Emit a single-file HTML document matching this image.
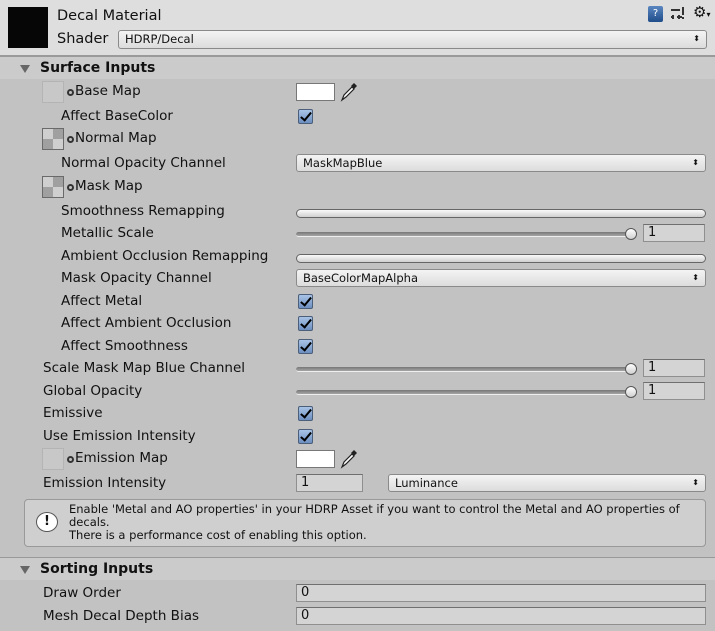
<!DOCTYPE html>
<html><head><meta charset="utf-8"><style>
*{margin:0;padding:0;box-sizing:border-box}
body{width:715px;height:631px;background:#c2c2c2;font-family:"DejaVu Sans","Liberation Sans",sans-serif;font-size:13.5px;color:#111;position:relative;overflow:hidden}
.a{position:absolute}
.lbl{position:absolute;white-space:nowrap;line-height:16px}
.dd{position:absolute;height:18px;border:1px solid #8a8a8a;border-radius:3px;background:linear-gradient(#f4f4f4,#dcdcdc);font-size:11.5px;line-height:16px;padding-left:6px}
.dd:after{content:"⬍";position:absolute;right:6px;top:0;font-size:8px}
.cb{position:absolute;left:298px;width:15px;height:15px;border:1px solid #4b5f7a;border-radius:2px;background:linear-gradient(#a9c3e6,#6d8fc0)}
.cb:after{content:"";position:absolute;left:4px;top:0px;width:4px;height:9px;border:solid #000;border-width:0 2.5px 2.5px 0;transform:rotate(40deg)}
.sl{position:absolute;left:296px;width:336px;height:5px;border-radius:3px;background:linear-gradient(#777,#a5a5a5);border-bottom:1px solid #eee}
.knob{position:absolute;left:625px;width:12px;height:12px;border-radius:50%;border:1px solid #555;background:linear-gradient(#fff,#d0d0d0)}
.num{position:absolute;height:18px;border:1px solid #8f8f8f;border-top-color:#6f6f6f;background:#d4d4d4;font-size:13px;line-height:16px;padding-left:4px}
.mm{position:absolute;left:296px;width:410px;height:9px;border-radius:5px;border:1px solid #666;background:linear-gradient(#fafafa,#d0d0d0)}
.tex{position:absolute;left:42px;width:22px;height:22px;border:1px solid #6a6a6a;background:conic-gradient(#a0a0a0 0 25%,#cfcfcf 0 50%,#a0a0a0 0 75%,#cfcfcf 0)}
.texe{position:absolute;left:42px;width:22px;height:22px;border:1px solid #b4b4b4;background:#c8c8c8}
.dot{display:inline-block;width:7px;height:7px;border:2px solid #333;border-radius:50%;margin-right:1px;vertical-align:-1px}
.col{position:absolute;left:296px;width:39px;height:18px;border:1px solid #777;background:#fff}
.pip{position:absolute;left:340px;width:18px;height:20px}
.hdr{position:absolute;left:0;width:715px;height:22px;background:#cbcbcb;font-weight:bold;font-size:14px;line-height:22px}
.tri{position:absolute;left:20px;top:8px;width:0;height:0;border-left:5px solid transparent;border-right:5px solid transparent;border-top:8px solid #666}
</style></head><body>
<div class="a" style="left:0;top:0;width:715px;height:57px;background:#dedede;border-bottom:2px solid #9a9a9a"></div>
<div class="a" style="left:8px;top:7px;width:40px;height:41px;background:#060606"></div>
<div class="lbl" style="left:57px;top:8px;font-size:14.5px">Decal Material</div>
<div class="lbl" style="left:57px;top:31px;font-size:14.5px">Shader</div>
<div class="dd" style="left:118px;top:30px;width:589px;height:19px;font-size:11.5px">HDRP/Decal</div>
<div class="a" style="left:648px;top:6px;width:15px;height:16px;border-radius:2px;background:linear-gradient(#5a86c0,#1f4d8a);color:#fff;font-size:10px;text-align:center;line-height:16px">?</div>
<svg class="a" style="left:670px;top:6px" width="16" height="16"><path d="M1 4h9M1 11h3M7 11h5M3 9v4M9 9v4M13 1v8M13 11v2" stroke="#333" stroke-width="2" fill="none"/></svg>
<div class="lbl" style="left:693px;top:4px;font-size:15px">⚙<span style="font-size:8px">▾</span></div>
<div class="hdr" style="top:57px"><div class="tri"></div><span style="position:absolute;left:40px;top:0">Surface Inputs</span></div>

<div class="texe" style="top:81px"></div><div class="lbl" style="left:67px;top:83px"><span class="dot"></span>Base Map</div>
<div class="col" style="top:83px"></div><svg class="pip" style="top:82px" viewBox="0 0 18 20"><path d="M2 18l2-5 8-8 2 2-8 8z" fill="#fff" stroke="#222" stroke-width="1.2"/><path d="M11 4l3-3 3 3-3 3z" fill="#222"/></svg>
<div class="lbl" style="left:61px;top:108px">Affect BaseColor</div><div class="cb" style="top:109px"></div>
<div class="tex" style="top:128px"></div><div class="lbl" style="left:67px;top:130px"><span class="dot"></span>Normal Map</div>
<div class="lbl" style="left:61px;top:155px">Normal Opacity Channel</div><div class="dd" style="left:296px;top:154px;width:410px">MaskMapBlue</div>
<div class="tex" style="top:176px"></div><div class="lbl" style="left:67px;top:178px"><span class="dot"></span>Mask Map</div>
<div class="lbl" style="left:61px;top:203px">Smoothness Remapping</div><div class="mm" style="top:209px"></div>
<div class="lbl" style="left:61px;top:225px">Metallic Scale</div><div class="sl" style="top:232px"></div><div class="knob" style="top:228px"></div><div class="num" style="left:643px;top:224px;width:62px">1</div>
<div class="lbl" style="left:61px;top:248px">Ambient Occlusion Remapping</div><div class="mm" style="top:254px"></div>
<div class="lbl" style="left:61px;top:270px">Mask Opacity Channel</div><div class="dd" style="left:296px;top:269px;width:410px">BaseColorMapAlpha</div>
<div class="lbl" style="left:61px;top:293px">Affect Metal</div><div class="cb" style="top:294px"></div>
<div class="lbl" style="left:61px;top:315px">Affect Ambient Occlusion</div><div class="cb" style="top:316px"></div>
<div class="lbl" style="left:61px;top:338px">Affect Smoothness</div><div class="cb" style="top:339px"></div>
<div class="lbl" style="left:43px;top:360px">Scale Mask Map Blue Channel</div><div class="sl" style="top:367px"></div><div class="knob" style="top:363px"></div><div class="num" style="left:643px;top:359px;width:62px">1</div>
<div class="lbl" style="left:43px;top:383px">Global Opacity</div><div class="sl" style="top:390px"></div><div class="knob" style="top:386px"></div><div class="num" style="left:643px;top:382px;width:62px">1</div>
<div class="lbl" style="left:43px;top:405px">Emissive</div><div class="cb" style="top:406px"></div>
<div class="lbl" style="left:43px;top:428px">Use Emission Intensity</div><div class="cb" style="top:429px"></div>
<div class="texe" style="top:448px"></div><div class="lbl" style="left:67px;top:450px"><span class="dot"></span>Emission Map</div>
<div class="col" style="top:450px"></div><svg class="pip" style="top:449px" viewBox="0 0 18 20"><path d="M2 18l2-5 8-8 2 2-8 8z" fill="#fff" stroke="#222" stroke-width="1.2"/><path d="M11 4l3-3 3 3-3 3z" fill="#222"/></svg>
<div class="lbl" style="left:43px;top:475px">Emission Intensity</div><div class="num" style="left:296px;top:474px;width:67px">1</div>
<div class="dd" style="left:388px;top:474px;width:318px">Luminance</div>
<div class="a" style="left:24px;top:499px;width:682px;height:48px;border:1px solid #999;border-radius:4px;background:#cfcfcf"></div>
<div class="a" style="left:36px;top:512px;width:22px;height:20px;border:1.5px solid #555;border-radius:50%;background:#fff;text-align:center;font-weight:bold;font-size:13px;line-height:18px">!</div>
<div class="lbl" style="left:69px;top:503px;font-size:11.5px;line-height:13px">Enable 'Metal and AO properties' in your HDRP Asset if you want to control the Metal and AO properties of<br>decals.<br>There is a performance cost of enabling this option.</div>
<div class="a" style="left:0;top:557px;width:715px;height:1px;background:#999"></div>
<div class="hdr" style="top:558px"><div class="tri"></div><span style="position:absolute;left:40px;top:0">Sorting Inputs</span></div>
<div class="lbl" style="left:43px;top:585px">Draw Order</div><div class="num" style="left:296px;top:584px;width:410px">0</div>
<div class="lbl" style="left:43px;top:608px">Mesh Decal Depth Bias</div><div class="num" style="left:296px;top:607px;width:410px">0</div>
</body></html>
